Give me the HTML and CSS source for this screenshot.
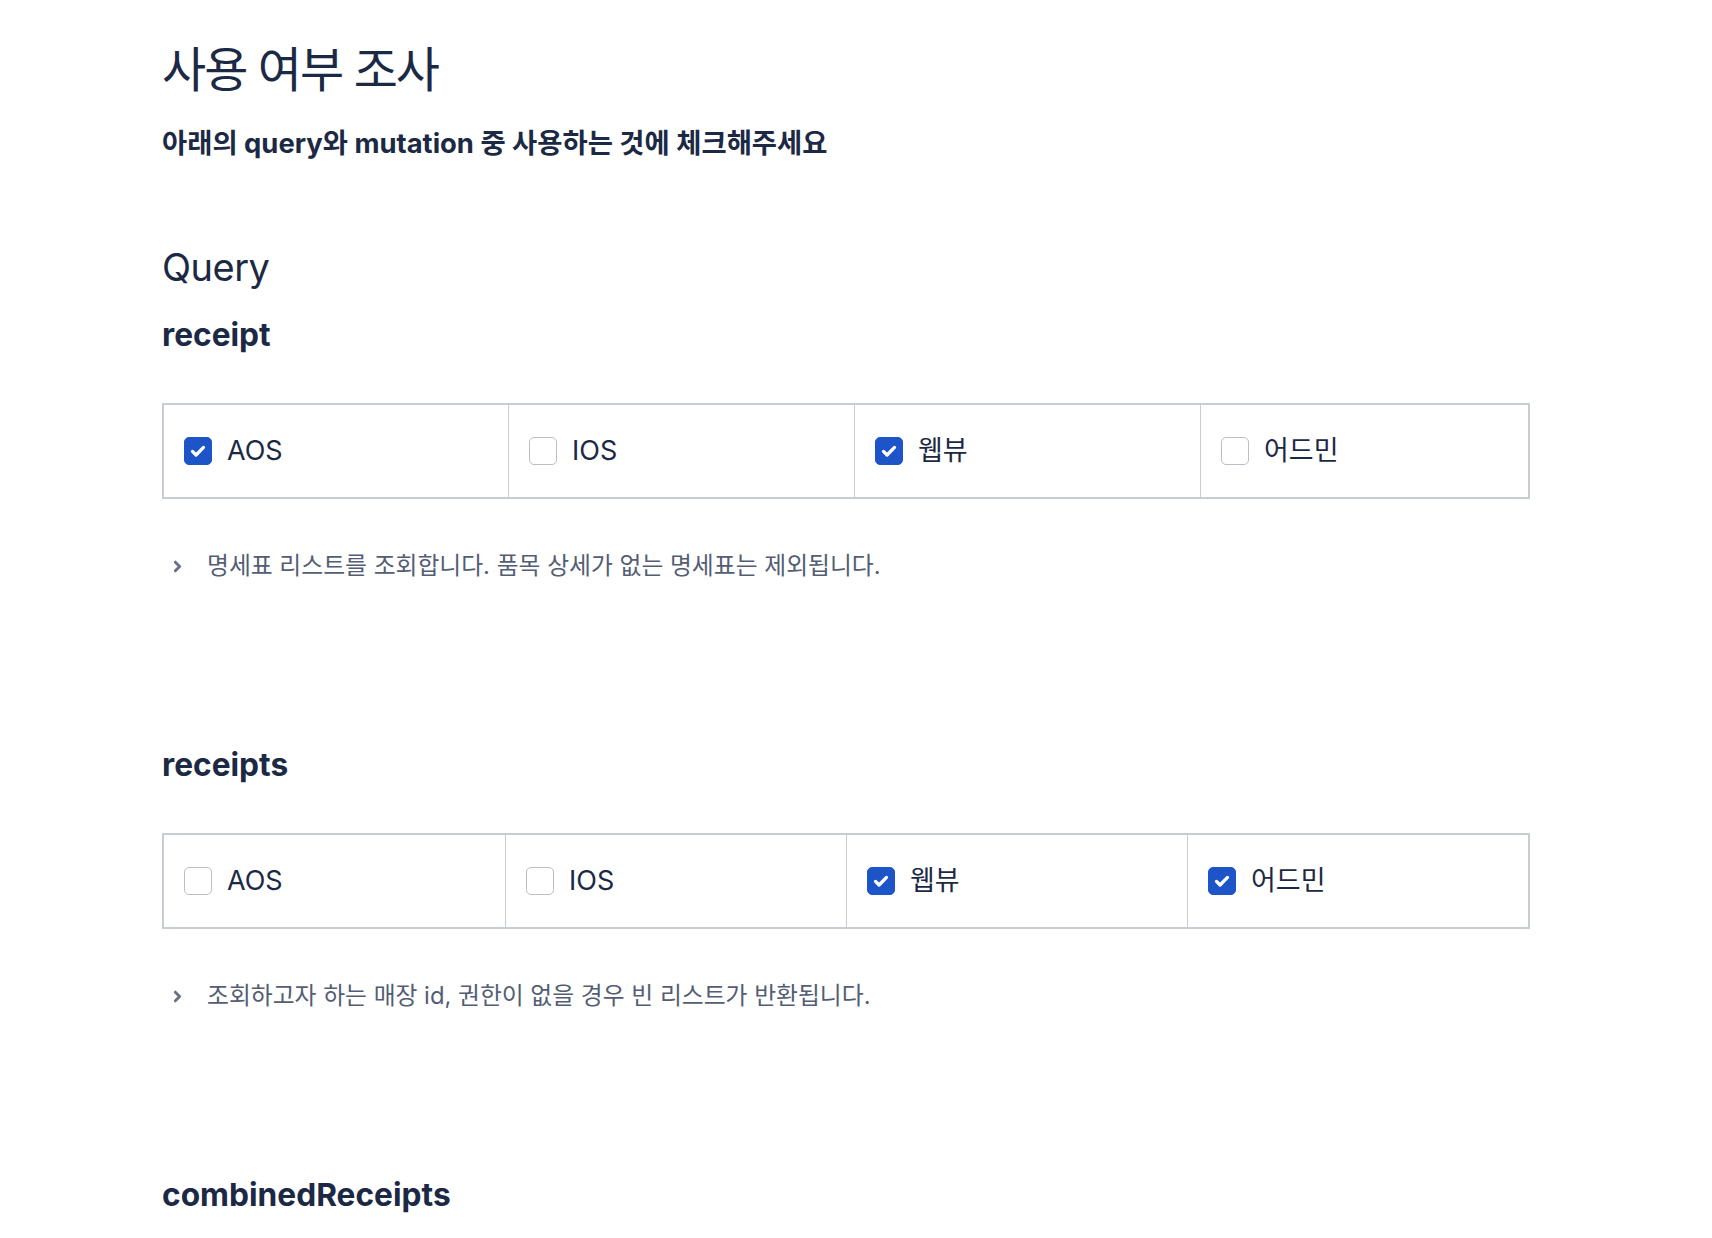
FILE: index.html
```html
<!DOCTYPE html>
<html lang="ko">
<head>
<meta charset="utf-8">
<title>사용 여부 조사</title>
<link rel="stylesheet" href="styles.css">
</head>
<body>
<main class="page">
  <h1 class="title">사용 여부 조사</h1>
  <p class="subtitle">아래의 query와 mutation 중 사용하는 것에 체크해주세요</p>

  <h2 class="section">Query</h2>

  <section class="item">
    <h3 class="item-name">receipt</h3>
    <div class="options options-first">
      <label class="option"><span class="box checked"><svg viewBox="0 0 16 16"><path d="M4 8.3l2.6 2.6L12 5.4"/></svg></span><span class="label">AOS</span></label>
      <label class="option"><span class="box"></span><span class="label">IOS</span></label>
      <label class="option"><span class="box checked"><svg viewBox="0 0 16 16"><path d="M4 8.3l2.6 2.6L12 5.4"/></svg></span><span class="label">웹뷰</span></label>
      <label class="option"><span class="box"></span><span class="label">어드민</span></label>
    </div>
    <div class="desc"><svg class="chev" viewBox="0 0 10 14"><path d="M3 3l4 4-4 4"/></svg><span>명세표 리스트를 조회합니다. 품목 상세가 없는 명세표는 제외됩니다.</span></div>
  </section>

  <section class="item">
    <h3 class="item-name">receipts</h3>
    <div class="options">
      <label class="option"><span class="box"></span><span class="label">AOS</span></label>
      <label class="option"><span class="box"></span><span class="label">IOS</span></label>
      <label class="option"><span class="box checked"><svg viewBox="0 0 16 16"><path d="M4 8.3l2.6 2.6L12 5.4"/></svg></span><span class="label">웹뷰</span></label>
      <label class="option"><span class="box checked"><svg viewBox="0 0 16 16"><path d="M4 8.3l2.6 2.6L12 5.4"/></svg></span><span class="label">어드민</span></label>
    </div>
    <div class="desc"><svg class="chev" viewBox="0 0 10 14"><path d="M3 3l4 4-4 4"/></svg><span>조회하고자 하는 매장 id, 권한이 없을 경우 빈 리스트가 반환됩니다.</span></div>
  </section>

  <section class="item">
    <h3 class="item-name">combinedReceipts</h3>
  </section>
</main>
</body>
</html>
```

FILE: styles.css
```css
* { box-sizing: border-box; }
html, body { margin: 0; padding: 0; background: #ffffff; }
body {
  font-family: Inter, "Noto Sans CJK KR", "Noto Sans", sans-serif;
  color: #1c2945;
  overflow: hidden;
  height: 1238px;
}
.page {
  width: 1368px;
  margin-left: 162px;
}
.title {
  font-size: 48px;
  line-height: 58px;
  font-weight: 400;
  margin: 41px 0 0;
  letter-spacing: -2px;
}
.subtitle {
  font-size: 27.4px;
  line-height: 32px;
  font-weight: 700;
  margin: 28px 0 0;
  letter-spacing: 0;
}
.section {
  font-size: 38px;
  line-height: 46px;
  font-weight: 400;
  margin: 85px 0 0;
  letter-spacing: -0.5px;
}
.item-name {
  font-size: 31.7px;
  line-height: 38px;
  font-weight: 700;
  margin: 26px 0 0;
  letter-spacing: 0;
}
.item + .item .item-name { margin-top: 165px; }
.options {
  margin-top: 49px;
  display: grid;
  grid-template-columns: repeat(4, 1fr);
  border: 2px solid #c8ccd3;
  height: 96px;
}
.options-first {
  grid-template-columns: 344px 346px 346px 1fr;
}
.option {
  display: flex;
  align-items: center;
  gap: 15px;
  padding-left: 20px;
  border-left: 1px solid #c8ccd3;
}
.option:first-child { border-left: 0; }
.box {
  width: 28px;
  height: 28px;
  border: 1.5px solid #b9bdc6;
  border-radius: 5px;
  background: #fff;
  display: flex;
  align-items: center;
  justify-content: center;
  flex: none;
}
.box.checked {
  background: #1d54c8;
  border-color: #1d54c8;
}
.box svg {
  width: 22px;
  height: 22px;
  fill: none;
  stroke: #ffffff;
  stroke-width: 2.4;
  stroke-linecap: round;
  stroke-linejoin: round;
}
.label {
  font-size: 27px;
  line-height: 32px;
  color: #1c2945;
  letter-spacing: 0;
}
.desc {
  margin-top: 52px;
  display: flex;
  align-items: center;
  font-size: 23.8px;
  line-height: 30px;
  color: #535d73;
  letter-spacing: 0;
}
.chev {
  width: 11px;
  height: 15px;
  margin-left: 10px;
  margin-right: 24px;
  fill: none;
  stroke: #6b7283;
  stroke-width: 2.8;
  stroke-linecap: round;
  stroke-linejoin: round;
}
```
